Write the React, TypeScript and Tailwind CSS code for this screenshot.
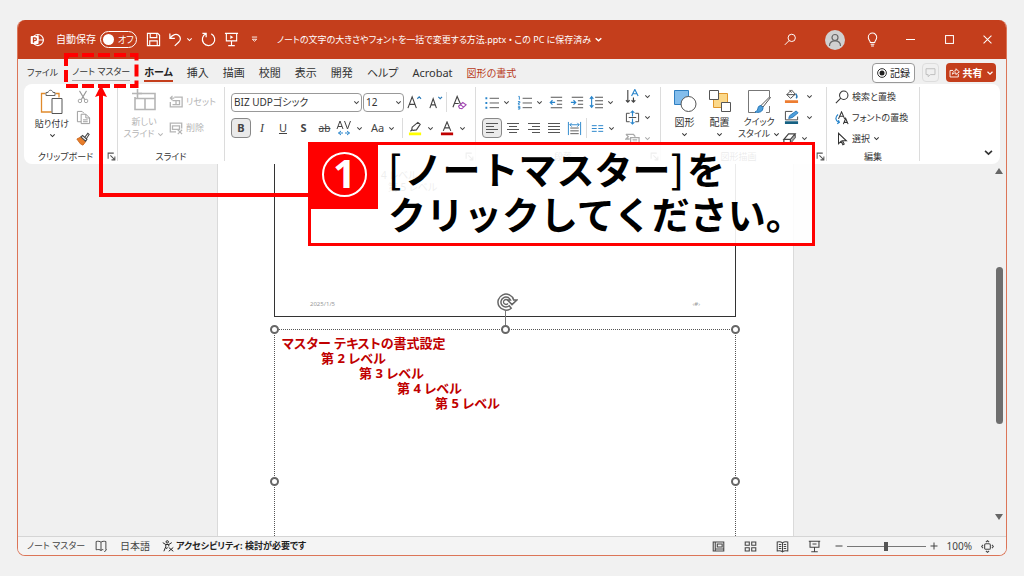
import type { ReactNode } from "react";

type Kids = { children?: ReactNode };

function Icon({ children, className = "size-4", box = "0 0 16 16" }: Kids & { className?: string; box?: string }) {
  return (
    <svg viewBox={box} className={`shrink-0 ${className}`} fill="none" stroke="currentColor" strokeWidth="1" aria-hidden="true">
      {children}
    </svg>
  );
}

function Chevron({ className = "size-[7px]" }: { className?: string }) {
  return (
    <Icon box="0 0 8 8" className={className}>
      <path d="M1.5 2.8 4 5.2 6.5 2.8" strokeWidth="1.2" />
    </Icon>
  );
}

function Tool({ label, className = "w-[21px]", children }: Kids & { label: string; className?: string }) {
  return (
    <button type="button" aria-label={label} className={`flex h-5 shrink-0 items-center justify-center gap-[4px] ${className}`}>
      {children}
    </button>
  );
}

function Group({ label, launcher, className, children }: Kids & { label: string; launcher?: boolean; className: string }) {
  return (
    <section aria-label={label} className={`flex shrink-0 ${className}`}>
      <div className="flex min-w-0 flex-1 flex-col">
        <div className="flex h-[65px] justify-start">{children}</div>
        <div className="flex h-[15px] items-center">
          <span className="flex-1 text-center text-[9px] leading-[15px]">{label}</span>
          {launcher && (
            <button type="button" aria-label={`${label}の詳細`} className="mr-[1px] text-[#555]">
              <Icon box="0 0 8 8" className="size-[9px]">
                <path d="M1 6V1h5M3 3l3.6 3.6M7 4v3H4" strokeWidth=".9" />
              </Icon>
            </button>
          )}
        </div>
      </div>
      <div className="my-[3px] w-px bg-[#dcdcdc]" />
    </section>
  );
}

function Lines({ rows }: { rows: [number, number][] }) {
  return (
    <Icon className="h-4 w-4">
      {rows.map(([a, b], i) => (
        <path key={i} d={`M${a} ${3.5 + i * 3}H${b}`} stroke="#555" />
      ))}
    </Icon>
  );
}

function TitleBar() {
  return (
    <header className="flex h-[39px] shrink-0 items-center bg-[#c43e1c] pl-3 text-white">
      <Icon className="size-[14px]">
        <circle cx="9" cy="8" r="6.3" strokeWidth="1.4" />
        <path d="M9 1.7V8h6.3" strokeWidth="1.3" />
        <rect x=".8" y="3.5" width="9" height="9" rx="1" fill="#fff" stroke="none" />
        <path d="M4 11.2V5.5h1.7a1.6 1.6 0 0 1 0 3.2H4" stroke="#c43e1c" strokeWidth="1.5" />
      </Icon>
      <span className="ml-3 text-[10px]">自動保存</span>
      <button type="button" role="switch" aria-checked="false" aria-label="自動保存" className="ml-[4px] flex h-[17px] w-[37px] items-center whitespace-nowrap rounded-full border border-white pl-[2px] text-[9px]">
        <span className="mr-[4px] size-[11px] shrink-0 rounded-full bg-white" />
        オフ
      </button>
      <Tool label="上書き保存" className="ml-[4px] w-6">
        <Icon className="size-[15px]">
          <path d="M1.5 1.5h11l2 2v11h-13zM4.5 1.5v4.5h7V1.5M4 14.5V9.5h8v5" strokeWidth="1.2" />
        </Icon>
      </Tool>
      <Tool label="元に戻す">
        <Icon className="size-[15px]">
          <path d="M2 1.5v5.3h5.3M2.2 6.6C5 2.5 9 1.6 11.5 3.8c2.6 2.3 2 5-.2 7.1L7.2 14.8" strokeWidth="1.3" />
        </Icon>
      </Tool>
      <Chevron />
      <Tool label="やり直し" className="ml-[3px] w-6">
        <Icon className="size-[15px]">
          <path d="M1.5 1.5H5.5V5.5M5.3 1.9A6.6 6.6 0 1 0 11 2" strokeWidth="1.3" />
        </Icon>
      </Tool>
      <Tool label="最初から開始" className="w-[22px]">
        <Icon className="size-[15px]">
          <path d="M1 1.5h14M2.5 1.5v8h11v-8M8 9.5v5M4.5 14.5h7" strokeWidth="1.2" />
          <path d="M6.7 3.5v4l3.2-2z" fill="currentColor" stroke="none" />
        </Icon>
      </Tool>
      <Tool label="クイック アクセスのカスタマイズ" className="w-6">
        <Icon box="0 0 8 8" className="size-[7px]">
          <path d="M1 1.2h6M1.5 3.7h5L4 6z" />
        </Icon>
      </Tool>
      <h1 className="ml-[11px] flex items-center gap-[3px] whitespace-nowrap text-[9px]">
        ノートの文字の大きさやフォントを一括で変更する方法.pptx • この PC に保存済み
        <Chevron className="size-[9px]" />
      </h1>
      <div className="ml-auto flex items-center">
        <Tool label="検索" className="mr-[23px] w-6">
          <Icon className="size-[13px]">
            <circle cx="9.5" cy="6" r="4.5" strokeWidth="1.2" />
            <path d="M6.3 9.3 1 14.6" strokeWidth="1.2" />
          </Icon>
        </Tool>
        <button type="button" aria-label="アカウント" className="mr-[8px] flex size-5 items-center justify-center rounded-full bg-[#d0d0d0] text-[#666]">
          <Icon className="size-4">
            <circle cx="8" cy="5.5" r="3" strokeWidth="1.2" />
            <path d="M2.5 14c0-3.2 2.3-5.2 5.5-5.2s5.5 2 5.5 5.2" strokeWidth="1.2" />
          </Icon>
        </button>
        <Tool label="ヒント" className="w-[38px]">
          <Icon className="size-[15px]">
            <path d="M5.7 11.3C5.5 9.3 3.5 8.3 3.5 5.6a4.5 4.5 0 0 1 9 0c0 2.7-2 3.7-2.2 5.7zM6 13h4M6.5 15h3" strokeWidth="1.1" />
          </Icon>
        </Tool>
        <Tool label="最小化" className="w-[39px]">
          <Icon className="size-[9px]"><path d="M0 8h16" strokeWidth="1.8" /></Icon>
        </Tool>
        <Tool label="最大化" className="w-[38px]">
          <Icon className="size-[9px]"><rect x="1" y="1" width="14" height="14" strokeWidth="1.8" /></Icon>
        </Tool>
        <Tool label="閉じる" className="w-[38px]">
          <Icon className="size-[9px]"><path d="m1 1 14 14M15 1 1 15" strokeWidth="1.8" /></Icon>
        </Tool>
      </div>
    </header>
  );
}

const TABS = ["挿入", "描画", "校閲", "表示", "開発", "ヘルプ", "Acrobat"];

function TabRow() {
  return (
    <nav aria-label="リボン" className="flex h-[25px] shrink-0 items-center gap-[14px] whitespace-nowrap pl-[9px] pr-[10px] pt-[2px] text-[11px] leading-4 text-[#333]">
      <div className="flex items-center gap-[14px] text-[9px]">
        <button type="button">ファイル</button>
        <button type="button" className="border-b border-[#aaa]">ノート マスター</button>
        <button type="button" className="border-b-2 border-[#c43e1c] text-[10px] font-bold text-[#222]">ホーム</button>
      </div>
      {TABS.map((t) => (
        <button key={t} type="button">{t}</button>
      ))}
      <button type="button" className="text-[10px] text-[#b8391a]">図形の書式</button>
      <div className="ml-auto flex items-center text-[10px]">
        <button type="button" className="flex h-5 w-[43px] items-center justify-center gap-[3px] rounded border border-[#999] bg-white text-[#222]">
          <Icon className="size-[10px]">
            <circle cx="8" cy="8" r="7" strokeWidth="1.5" />
            <circle cx="8" cy="8" r="4" fill="currentColor" stroke="none" />
          </Icon>
          記録
        </button>
        <button type="button" aria-label="コメント" className="ml-[7px] flex h-[19px] w-[17px] items-center justify-center rounded border border-[#ddd] text-[#bbb]">
          <Icon className="size-[11px]"><path d="M1.5 2.5h13v8.5H8L4.5 14v-3h-3z" strokeWidth="1.3" /></Icon>
        </button>
        <button type="button" className="ml-[7px] flex h-[19px] w-[50px] items-center justify-center gap-[3px] rounded bg-[#c43e1c] font-bold text-white">
          <Icon className="size-[11px]">
            <path d="M6 5H1.5v9.5h12V10M5 10.5c.5-3.5 2-5 5-5V2.5L15 7l-5 4V8.5c-2 0-3.5.5-5 2z" strokeWidth="1.3" />
          </Icon>
          共有
          <Chevron className="size-[8px]" />
        </button>
      </div>
    </nav>
  );
}

function ClipboardGroup() {
  return (
    <Group label="クリップボード" launcher className="w-[94px]">
      <button type="button" className="ml-[6px] flex w-11 flex-col items-center pt-[5px] text-[9px] leading-3">
        <Icon box="0 0 24 26" className="h-[26px] w-6">
          <path d="M5.5 4.5h-4v18.5h10M15.5 4.5h3.5v4" stroke="#e08a2c" strokeWidth="1.3" />
          <path d="M6 6.5v-3h2c.5-3 4.5-3 5 0h2v3z" stroke="#666" fill="#fff" />
          <path d="M12 9.5h10v15H12z" stroke="#555" fill="#fff" />
        </Icon>
        <span className="mt-[3px]">貼り付け</span>
        <Chevron className="mt-[2px] size-[7px]" />
      </button>
      <div className="flex flex-col pt-[2px]">
        <Tool label="切り取り" className="h-[21px] w-[18px] text-[#999]">
          <Icon className="size-[14px]">
            <path d="m4 1 6 10M12 1 6 11" strokeWidth="1.2" />
            <circle cx="4.5" cy="12.5" r="2" /><circle cx="11.5" cy="12.5" r="2" />
          </Icon>
        </Tool>
        <Tool label="コピー" className="h-[21px] w-[18px] text-[#999]">
          <Icon className="size-[15px]">
            <path d="M5.5 12.5h-4v-11h5l2 2M5.5 4.5h5l4 4v6h-9zM10.5 4.5v4h4M7.5 10.5h5M7.5 12.5h5" />
          </Icon>
        </Tool>
        <Tool label="書式のコピー" className="h-[21px] w-[18px]">
          <Icon className="size-[14px]">
            <path d="m1 8 4-2 6 5-3 4-3-1.5z" fill="#e87d2a" stroke="#c8651b" />
            <path d="m5.5 5.5 2-1.5 5 4.5-1.5 2zM10 6l3.5-4.5 1.5 1.3L12 7.5" fill="#fff" stroke="#444" strokeWidth="1.2" />
          </Icon>
        </Tool>
      </div>
    </Group>
  );
}

function SlideGroup() {
  return (
    <Group label="スライド" className="w-[107px]">
      <button type="button" disabled className="ml-[3px] flex w-[46px] flex-col items-center whitespace-nowrap pt-[5px] text-[9px] leading-3 text-[#b5b5b5]">
        <Icon box="0 0 24 24" className="mb-[3px] size-6">
          <path d="M5 4.5h18v16H3V8M3 9.5h20M13 9.5v11" strokeWidth="1.6" />
          <path d="M5.5 0v9M0 4.5h10" strokeWidth="1.6" />
        </Icon>
        <span>新しい</span>
        <span className="flex items-center gap-[3px]">スライド <Chevron /></span>
      </button>
      <div className="flex flex-col pl-[2px] pt-[5px] text-[9px] text-[#b5b5b5]">
        <button type="button" disabled className="flex h-[26px] items-center gap-[3px] whitespace-nowrap">
          <Icon className="size-[14px]">
            <path d="M6 2.5h9v11H1.5V8M4 6.5h8v4.5H4M8 6.5V11" strokeWidth="1.5" />
            <path d="M4 1 1.5 3.5 4 6M1.5 3.5H6" strokeWidth="1.3" />
          </Icon>
          リセット
        </button>
        <button type="button" disabled className="flex h-[26px] items-center gap-[3px]">
          <Icon className="size-[14px]">
            <path d="M8 12.5H1.5v-10h13v6M4 5.5h8v4H4z" strokeWidth="1.5" />
            <path d="m10 10 5 5M15 10l-5 5" strokeWidth="1.3" />
          </Icon>
          削除
        </button>
      </div>
    </Group>
  );
}

function Picker({ label, value, className }: { label: string; value: string; className: string }) {
  return (
    <div className={`relative flex items-center ${className}`}>
      <select aria-label={label} className="h-[19px] w-full appearance-none rounded border border-[#999] bg-white pl-[2px] text-[10px] leading-normal text-[#333]">
        <option>{value}</option>
      </select>
      <Chevron className="absolute right-[2px] top-[6px] size-[7px]" />
    </div>
  );
}

function FontGroup() {
  return (
    <Group label="フォント" launcher className="w-[251px]">
      <div className="flex flex-col pl-[6px] pt-[5px] text-[#444]">
        <div className="flex h-[26px] items-center">
          <Picker label="フォント名" value="BIZ UDPゴシック" className="w-[131px]" />
          <Picker label="フォント サイズ" value="12" className="ml-[1px] w-[41px]" />
          <Tool label="フォント サイズの拡大">
            <Icon className="size-[15px]">
              <path d="m1 14 4.5-12L10 14M2.7 10h5.7" strokeWidth="1.2" />
              <path d="m11 4 2-2 2 2" stroke="#2a7ab8" strokeWidth="1.2" />
            </Icon>
          </Tool>
          <Tool label="フォント サイズの縮小">
            <Icon className="size-[15px]">
              <path d="M2 14 5.5 4 9 14M3.3 10.5h4.5" strokeWidth="1.2" />
              <path d="m11 2 2 2 2-2" stroke="#2a7ab8" strokeWidth="1.2" />
            </Icon>
          </Tool>
          <div className="h-5 w-px bg-[#dcdcdc]" />
          <Tool label="すべての書式をクリア" className="w-6">
            <Icon className="size-[15px]">
              <path d="M1 13 5.5 1.5 9 9.5M2.7 9h4.5" strokeWidth="1.2" />
              <path d="m7 12 4.5-4 3.5 2.5-4.5 4-2.5-.3zM9 10.2l3.3 2.7" stroke="#a349b5" strokeWidth="1.2" />
            </Icon>
          </Tool>
        </div>
        <div className="flex h-[26px] items-center text-[11px]">
          <button type="button" aria-pressed="true" className="flex h-5 w-5 items-center justify-center rounded border border-[#888] bg-[#eaeaea] font-bold">B</button>
          <Tool label="斜体" className="w-[22px]"><span className="font-['Liberation_Serif',serif] text-xs italic">I</span></Tool>
          <Tool label="下線" className="w-[20px]"><span className="underline">U</span></Tool>
          <Tool label="影"><span className="font-bold">S</span></Tool>
          <Tool label="取り消し線"><span className="text-[10px] line-through">ab</span></Tool>
          <Tool label="文字の間隔" className="w-[28px]">
            <Icon className="size-4">
              <path d="m1 9 3-8 3 8M2 6.5h4M8.5 1l3 8 3-8" />
              <path d="M5 11 2.5 13 5 15M2.5 13H7M9 13h4.5M11 11l2.5 2-2.5 2" stroke="#2a86cc" />
            </Icon>
            <Chevron />
          </Tool>
          <Tool label="文字種の変換" className="ml-[5px] w-[30px]">Aa<Chevron /></Tool>
          <div className="mx-[4px] h-5 w-px bg-[#dcdcdc]" />
          <Tool label="蛍光ペン" className="w-[28px]">
            <Icon className="size-[15px]">
              <path d="m4.5 6.5 6-5 2.5 2-4 6-3.5.5-1.5-1zM5 9l-2.5 2" strokeWidth="1.2" />
              <path d="M1 13.7h13" stroke="#ff0" strokeWidth="3" />
            </Icon>
            <Chevron />
          </Tool>
          <Tool label="フォントの色" className="ml-[4px] w-[28px]">
            <Icon className="size-[15px]">
              <path d="M3.5 10.5 7.5 1l4 9.5M5 7.3h5" strokeWidth="1.2" />
              <path d="M1 13.7h13" stroke="#c00000" strokeWidth="3" />
            </Icon>
            <Chevron />
          </Tool>
        </div>
      </div>
    </Group>
  );
}

function ParagraphGroup() {
  const blue = "#2a86cc";
  return (
    <Group label="段落" launcher className="w-[185px]">
      <div className="flex flex-col pl-[6px] pt-[5px] text-[#444]">
        <div className="flex h-[26px] items-center">
          <Tool label="箇条書き" className="w-[29px]">
            <Icon className="size-[15px]">
              <path d="M6 3.5h10M6 8.5h10M6 13.5h10" stroke="#555" />
              <path d="M1.5 3.5h2M1.5 8.5h2M1.5 13.5h2" stroke={blue} strokeWidth="2.2" />
            </Icon>
            <Chevron />
          </Tool>
          <Tool label="段落番号" className="ml-[4px] w-[29px]">
            <Icon className="size-[15px]">
              <path d="M6 3.5h10M6 8.5h10M6 13.5h10" stroke="#555" />
              <path d="M1.5 1.5h1V5M1 7h2v1.5H1.5V10H3M1 12h2v3H1M1 13.5h2" stroke={blue} />
            </Icon>
            <Chevron />
          </Tool>
          <Tool label="インデントを減らす" className="ml-[2px] w-5">
            <Icon className="size-[14px]">
              <path d="M2 2.5h13M9 6.5h6M9 10.5h6M2 14.5h13" stroke="#555" strokeWidth="1.2" />
              <path d="M7 8.5H1.5M4 6 1.5 8.5 4 11" stroke={blue} strokeWidth="1.4" />
            </Icon>
          </Tool>
          <Tool label="インデントを増やす">
            <Icon className="size-[14px]">
              <path d="M2 2.5h13M9 6.5h6M9 10.5h6M2 14.5h13" stroke="#555" strokeWidth="1.2" />
              <path d="M1 8.5h5.5M4 6l2.5 2.5L4 11" stroke={blue} strokeWidth="1.4" />
            </Icon>
          </Tool>
          <Tool label="行間" className="ml-[1px] w-[26px]">
            <Icon className="size-[14px]">
              <path d="M7 2.5h9M7 6.5h9M7 10.5h9M7 14.5h9" stroke="#555" strokeWidth="1.2" />
              <path d="M3 2v12M1 4.5 3 2l2 2.5M1 11.5 3 14l2-2.5" stroke={blue} strokeWidth="1.3" />
            </Icon>
            <Chevron />
          </Tool>
        </div>
        <div className="flex h-[26px] items-center">
          <button type="button" aria-label="左揃え" aria-pressed="true" className="flex h-5 w-5 items-center justify-center rounded border border-[#888] bg-[#eaeaea]">
            <Lines rows={[[2, 14], [2, 10], [2, 14], [2, 10]]} />
          </button>
          <Tool label="中央揃え"><Lines rows={[[2, 14], [4, 12], [2, 14], [4, 12]]} /></Tool>
          <Tool label="右揃え"><Lines rows={[[2, 14], [6, 14], [2, 14], [6, 14]]} /></Tool>
          <Tool label="両端揃え" className="w-5"><Lines rows={[[2, 14], [2, 14], [2, 14], [2, 14]]} /></Tool>
          <Tool label="均等割り付け">
            <Icon className="size-[15px]">
              <path d="M3.5 7.5h9M3.5 10.5h9M3.5 13.5h9" stroke="#555" />
              <path d="M1.5 1v14M14.5 1v14M3 4h10M5 2 3 4l2 2M11 2l2 2-2 2" stroke={blue} />
            </Icon>
          </Tool>
          <div className="ml-[1px] mr-[2px] h-5 w-px bg-[#dcdcdc]" />
          <Tool label="段の追加" className="w-[28px]">
            <Icon className="size-[13px]">
              <path d="M1 4.5h6M1 8h6M1 11.5h6M9 4.5h6M9 8h6M9 11.5h6" stroke={blue} strokeWidth="1.2" />
            </Icon>
            <Chevron />
          </Tool>
        </div>
      </div>
      <div className="ml-[9px] flex flex-col pt-[2px] text-[#444]">
        <Tool label="文字列の方向" className="h-[21px] w-[24px]">
          <Icon className="size-[15px]">
            <path d="M3 1v13M1 12l2 2 2-2M9 9v5M7 12l2 2 2-2" strokeWidth="1.2" />
            <path d="m7 7.5 3.5-7 3.5 7M8.5 5h4" stroke={blue} strokeWidth="1.2" />
          </Icon>
          <Chevron />
        </Tool>
        <Tool label="文字の配置" className="h-[21px] w-[24px]">
          <Icon className="size-[15px]">
            <path d="M5 3.5H1.5v9H5M11 3.5h3.5v9H11M4 8h8" />
            <path d="M8 7V1M6 3l2-2 2 2M8 9v6M6 13l2 2 2-2" stroke={blue} strokeWidth="1.2" />
          </Icon>
          <Chevron />
        </Tool>
        <Tool label="SmartArt に変換" className="h-[21px] w-[24px] text-[#aaa]">
          <Icon className="size-[15px]">
            <path d="M1 3.5h8l2 2.5M1 3.5 3.5 6 1 8.5h4" strokeWidth="1.4" />
            <path d="M6 7h9v7H6zM8 9.5h5M8 12h5" strokeWidth="1.3" />
          </Icon>
          <Chevron />
        </Tool>
      </div>
    </Group>
  );
}

function BigTool({ className, lines, children }: Kids & { className: string; lines: string[] }) {
  const last = lines.length - 1;
  return (
    <button type="button" className={`flex flex-col items-center whitespace-nowrap pt-[5px] leading-3 ${className}`}>
      {children}
      <span className="mt-[3px]">{lines[0]}</span>
      {last > 0 ? (
        <span className="flex items-center gap-[3px]">{lines[last]}<Chevron /></span>
      ) : (
        <Chevron className="mt-[3px] size-[7px]" />
      )}
    </button>
  );
}

function DrawingGroup() {
  return (
    <Group label="図形描画" launcher className="w-[166px]">
      <BigTool lines={["図形"]} className="ml-[6px] w-[35px] text-[10px]">
        <Icon box="0 0 24 24" className="size-6">
          <path d="M1.5 1.5h14v14h-14z" fill="#83bdec" stroke="#2f7fc1" />
          <circle cx="15.5" cy="15" r="7.5" fill="#fff" stroke="#555" />
        </Icon>
      </BigTool>
      <BigTool lines={["配置"]} className="w-[35px] text-[10px]">
        <Icon box="0 0 24 24" className="size-6">
          <path d="M5.5 4.5h14v14h-14z" fill="#fbd88a" stroke="#e0962c" />
          <path d="M1.5 1.5h9v9h-9zM13.5 13.5h9v9h-9z" fill="#fff" stroke="#555" />
        </Icon>
      </BigTool>
      <BigTool lines={["クイック", "スタイル"]} className="w-[44px] text-[9px]">
        <Icon box="0 0 24 24" className="size-6">
          <path d="M9 23.5H1.5v-22h21v8M22.5 17v6.5H19" stroke="#777" />
          <path d="M23.5 8.5 16 18l-2-1.5 8.5-8.5z" fill="#fff" stroke="#555" />
          <path d="M14 16.5c-3 0-3 3-3.5 4.5-.5 1-1.5 1.5-2.5 2 4 1 8 0 8-4.5z" fill="#4d9fdc" stroke="#2474b5" />
        </Icon>
      </BigTool>
      <div className="ml-[2px] flex flex-col pt-[2px] text-[#444]">
        <Tool label="図形の塗りつぶし" className="h-[21px] w-[30px]">
          <Icon className="mr-[3px] size-[15px]">
            <path d="m3 6 5-5 4 4.5-5 4.5zM3 6h9M6 1l2 3" />
            <path d="M12.5 5c1.5 2 1.5 4 .5 5" stroke="#2a7ab8" strokeWidth="1.5" />
            <path d="M1 13.5h14" stroke="#ed7d31" strokeWidth="3" />
          </Icon>
          <Chevron />
        </Tool>
        <Tool label="図形の枠線" className="h-[21px] w-[30px]">
          <Icon className="mr-[3px] size-[15px]">
            <path d="M9 1.5H1.5v9h13V7" />
            <path d="m5 9 1-3 7-5 2 2-6 5z" fill="#4d9fdc" stroke="#2474b5" />
            <path d="M1 13.5h14" stroke="#156082" strokeWidth="3" />
          </Icon>
          <Chevron />
        </Tool>
        <Tool label="図形の効果" className="h-[21px] w-[24px]">
          <Icon className="size-[15px]">
            <path d="m2 9 5-6h7l-5 6zM2 9v4h7V9M9 13l5-6V3" strokeWidth="1.3" />
            <path d="m9.7 12.5 4-5V4.5l-4 5z" fill="#999" stroke="none" />
          </Icon>
          <Chevron />
        </Tool>
      </div>
    </Group>
  );
}

function EditGroup() {
  return (
    <Group label="編集" className="w-[93px]">
      <div className="flex flex-col pl-[8px] pt-[2px] text-[9px] text-[#333]">
        <button type="button" className="flex h-[21px] items-center gap-[3px] whitespace-nowrap">
          <Icon className="size-[14px]">
            <circle cx="10" cy="6" r="4.8" strokeWidth="1.2" />
            <path d="M6.6 9.4 1 15" strokeWidth="1.2" />
          </Icon>
          検索と置換
        </button>
        <button type="button" className="flex h-[21px] items-center gap-[3px] whitespace-nowrap">
          <Icon className="size-[14px]">
            <path d="m4 9 3.5-8L11 9M5.5 6h4M9.5 15l2.7-6.5L15 15M10.5 13h3.5" strokeWidth="1.2" />
            <path d="M3.5 4C0 7 0 11 4.5 13M2.5 14.5 5 13 3.8 10.5" stroke="#2a86cc" strokeWidth="1.4" />
          </Icon>
          フォントの置換
        </button>
        <button type="button" className="flex h-[21px] items-center gap-[3px] whitespace-nowrap">
          <Icon className="size-[14px]"><path d="M4 1.5v12l3-3 2 4 1.5-.8-2-3.7H13z" strokeWidth="1.2" /></Icon>
          選択
          <Chevron />
        </button>
      </div>
    </Group>
  );
}

function Handle({ className }: { className: string }) {
  return <span className={`absolute size-[9px] rounded-full border-2 border-[#666] bg-white ${className}`} />;
}

const LEVELS = ["第 2 レベル", "第 3 レベル", "第 4 レベル", "第 5 レベル"];
const INDENTS = ["pl-[46px]", "pl-[84px]", "pl-[122px]", "pl-[160px]"];

function Canvas() {
  return (
    <main className="flex min-h-0 flex-1 bg-[#f0f0f0]">
      <div className="flex min-w-0 flex-1 justify-center">
        <article className="flex w-[577px] flex-col items-center border-x border-[#dadada] bg-white">
          <div className="flex h-[153px] w-[462px] flex-col border border-t-0 border-[#333] text-[10px] text-[#555]">
            <ul className="pl-[98px] pt-[5px] leading-3">
              <li className="pl-[8px]">4 レベル</li>
              <li className="list-inside list-disc">第 5 レベル</li>
            </ul>
            <div className="mt-auto flex items-center justify-between pb-[8px] pl-[35px] pr-[35px] text-[6px] leading-2 text-[#999]">
              <span>2025/1/5</span>
              <span>‹#›</span>
            </div>
          </div>
          <div className="relative mt-[12px] w-[462px] flex-1 border border-b-0 border-dotted border-[#555] pt-[5px] text-[13px] font-bold text-[#c00000]">
            <p className="pl-[7px] leading-4">マスター テキストの書式設定</p>
            {LEVELS.map((t, i) => (
              <p key={t} className={`leading-[15px] ${INDENTS[i]}`}>{t}</p>
            ))}
            <Handle className="-left-[5px] -top-[5px]" />
            <Handle className="-right-[5px] -top-[5px]" />
            <span className="absolute -top-[19px] left-[230px] h-[15px] w-px bg-[#777]" />
            <Handle className="left-[226px] -top-[5px]" />
            <Handle className="-left-[5px] top-[147px]" />
            <Handle className="-right-[5px] top-[147px]" />
            <Icon box="0 0 22 20" className="absolute -top-[38px] left-[221px] h-5 w-[22px] text-[#666]">
              <path d="M17.7 8A8 8 0 1 0 15.2 16.2L13.3 13.8A5 5 0 1 1 14.5 8H11.5L16 12.6 20.8 8z" fill="#fff" strokeWidth="1.5" />
              <path d="M12 8.5A2.5 2.5 0 1 0 12 11.5" strokeWidth="1.3" />
            </Icon>
          </div>
        </article>
      </div>
      <div className="flex w-[14px] flex-col items-center justify-between pb-[16px] pt-[4px] text-[#666]">
        <Icon box="0 0 8 6" className="h-[6px] w-2"><path d="M0 6 4 0l4 6z" fill="currentColor" stroke="none" /></Icon>
        <div className="mt-[3px] h-[157px] w-[7px] rounded-full bg-[#6e6e6e]" />
        <Icon box="0 0 8 6" className="h-[6px] w-2"><path d="m0 0 4 6 4-6z" fill="currentColor" stroke="none" /></Icon>
      </div>
    </main>
  );
}

function StatusBar() {
  return (
    <footer className="flex h-[19px] shrink-0 items-center border-t border-[#d5d5d5] bg-[#f4f4f4] pl-[9px] pr-[12px] text-[10px] text-[#444]">
      <span className="whitespace-nowrap text-[9px]">ノート マスター</span>
      <Tool label="スペル チェック" className="ml-[6px] w-[20px]">
        <Icon className="size-[12px]">
          <path d="M8 3C6.5 1.5 4 1.5 1.5 2v11c2.5-.5 5-.5 6.5 1V3c1.5-1.5 4-1.5 6.5-1v11M8 14c1-1 2-1.3 3-1.3M12 14.5l1 1 2.5-3" strokeWidth="1.3" />
        </Icon>
      </Tool>
      <button type="button" className="ml-[9px]">日本語</button>
      <button type="button" className="ml-[12px] flex items-center gap-[2px] whitespace-nowrap text-[9px] font-bold text-[#222]">
        <Icon className="size-[12px]">
          <circle cx="7" cy="2.5" r="1.6" strokeWidth="1.3" />
          <path d="m1 3.5 4 2.5h4l4-2.5M5 6v3l-2.5 6M9 6v2.5M7 9.5 6 12M9 10l6 5M15 10l-6 5" strokeWidth="1.3" />
        </Icon>
        アクセシビリティ: 検討が必要です
      </button>
      <div className="ml-auto flex items-center">
        <Tool label="標準" className="w-8">
          <Icon className="size-[13px]"><path d="M1.5 2.5h13v11h-13zM4 2.5v11M4 11h10.5M6.5 5h6v3.5h-6z" strokeWidth="1.3" /></Icon>
        </Tool>
        <Tool label="スライド一覧" className="w-8">
          <Icon className="size-[13px]"><path d="M1.5 2.5h5v4h-5zM9.5 2.5h5v4h-5zM1.5 9.5h5v4h-5zM9.5 9.5h5v4h-5z" strokeWidth="1.3" /></Icon>
        </Tool>
        <Tool label="閲覧表示" className="w-8">
          <Icon className="size-[13px]"><path d="M8 3.5C6 2 4 2 1.5 2.5v11C4 13 6 13 8 14.5zM8 3.5C10 2 12 2 14.5 2.5v11C12 13 10 13 8 14.5M3.5 5.5h3M3.5 8h3M3.5 10.5h3M9.5 5.5h3M9.5 8h3M9.5 10.5h3" strokeWidth="1.3" /></Icon>
        </Tool>
        <Tool label="スライド ショー" className="w-8">
          <Icon className="size-[13px]"><path d="M1 1.5h14M2.5 1.5v7.5h11V1.5M5.5 5h5M8 9v5M4 14.5h8" strokeWidth="1.3" /></Icon>
        </Tool>
        <Tool label="縮小" className="w-4"><Icon className="size-[8px]"><path d="M1 8h14" strokeWidth="2" /></Icon></Tool>
        <input
          type="range"
          aria-label="ズーム"
          defaultValue={50}
          className="h-[9px] w-[79px] appearance-none bg-[linear-gradient(#777,#777)] bg-[length:100%_1px] bg-center bg-no-repeat [&::-webkit-slider-thumb]:h-[9px] [&::-webkit-slider-thumb]:w-[4px] [&::-webkit-slider-thumb]:appearance-none [&::-webkit-slider-thumb]:bg-[#555]"
        />
        <Tool label="拡大" className="w-4"><Icon className="size-[8px]"><path d="M1 8h14M8 1v14" strokeWidth="2" /></Icon></Tool>
        <span className="ml-[5px]">100%</span>
        <Tool label="ウィンドウに合わせる" className="ml-[9px] w-[13px]">
          <Icon className="size-[13px]">
            <rect x="4.5" y="4.5" width="7" height="7" rx="1.5" strokeWidth="1.3" />
            <path d="M6 2.5 8 .8l2 1.7M6 13.5l2 1.7 2-1.7M2.5 6 .8 8l1.7 2M13.5 6l1.7 2-1.7 2" strokeWidth="1.3" />
          </Icon>
        </Tool>
      </div>
    </footer>
  );
}

function Callout() {
  return (
    <>
      <svg viewBox="0 0 250 150" className="absolute left-[60px] top-[50px] h-[150px] w-[250px]" fill="none" stroke="#f00" aria-hidden="true">
        <path d="M6 5h70.5v31H6z" strokeWidth="4" strokeDasharray="12 4" />
        <path d="M4 3h5v5H4z" fill="#f00" stroke="none" />
        <path d="M41 44v101h208" strokeWidth="4" />
        <path d="m41 35 6 12-6-2-6 2z" fill="#f00" stroke="none" />
      </svg>
      <aside className="absolute left-[308px] top-[142px] flex h-[104px] w-[507px] items-start border-[3px] border-[#f00] bg-white/90 text-black">
        <div className="flex h-[64px] w-[67px] shrink-0 items-center justify-center bg-[#f00] pb-[6px]">
          <span className="flex size-[45px] items-center justify-center rounded-full border-2 border-white pb-[2px] font-['Noto_Sans',sans-serif] text-[40px] font-bold leading-none text-white">1</span>
        </div>
        <p className="whitespace-nowrap pl-[10px] font-['Noto_Sans_CJK_JP',sans-serif] text-[38px] font-bold leading-[45px] [font-feature-settings:normal]">
          <span className="mr-[3px] font-medium">[</span>ノートマスター<span className="mr-[3px] font-medium">]</span>を
          <br />
          クリックしてください。
        </p>
      </aside>
    </>
  );
}

export default function App() {
  return (
    <div className="relative flex h-screen flex-col bg-[#f1f1f1] px-[17px] py-5 font-['Noto_Sans','Noto_Sans_CJK_JP',sans-serif] [font-feature-settings:'palt']">
      <div className="flex min-h-0 flex-1 flex-col overflow-hidden rounded-lg border border-t-0 border-[#dc7558] bg-[#f0f0f0]">
        <TitleBar />
        <TabRow />
        <div className="mx-[6px] flex h-20 shrink-0 rounded-lg bg-white text-[#333]">
          <ClipboardGroup />
          <SlideGroup />
          <FontGroup />
          <ParagraphGroup />
          <DrawingGroup />
          <EditGroup />
          <button type="button" aria-label="リボンを折りたたむ" className="mb-[6px] ml-auto mr-[6px] self-end">
            <Chevron className="size-[11px]" />
          </button>
        </div>
        <Canvas />
        <StatusBar />
      </div>
      <Callout />
    </div>
  );
}
